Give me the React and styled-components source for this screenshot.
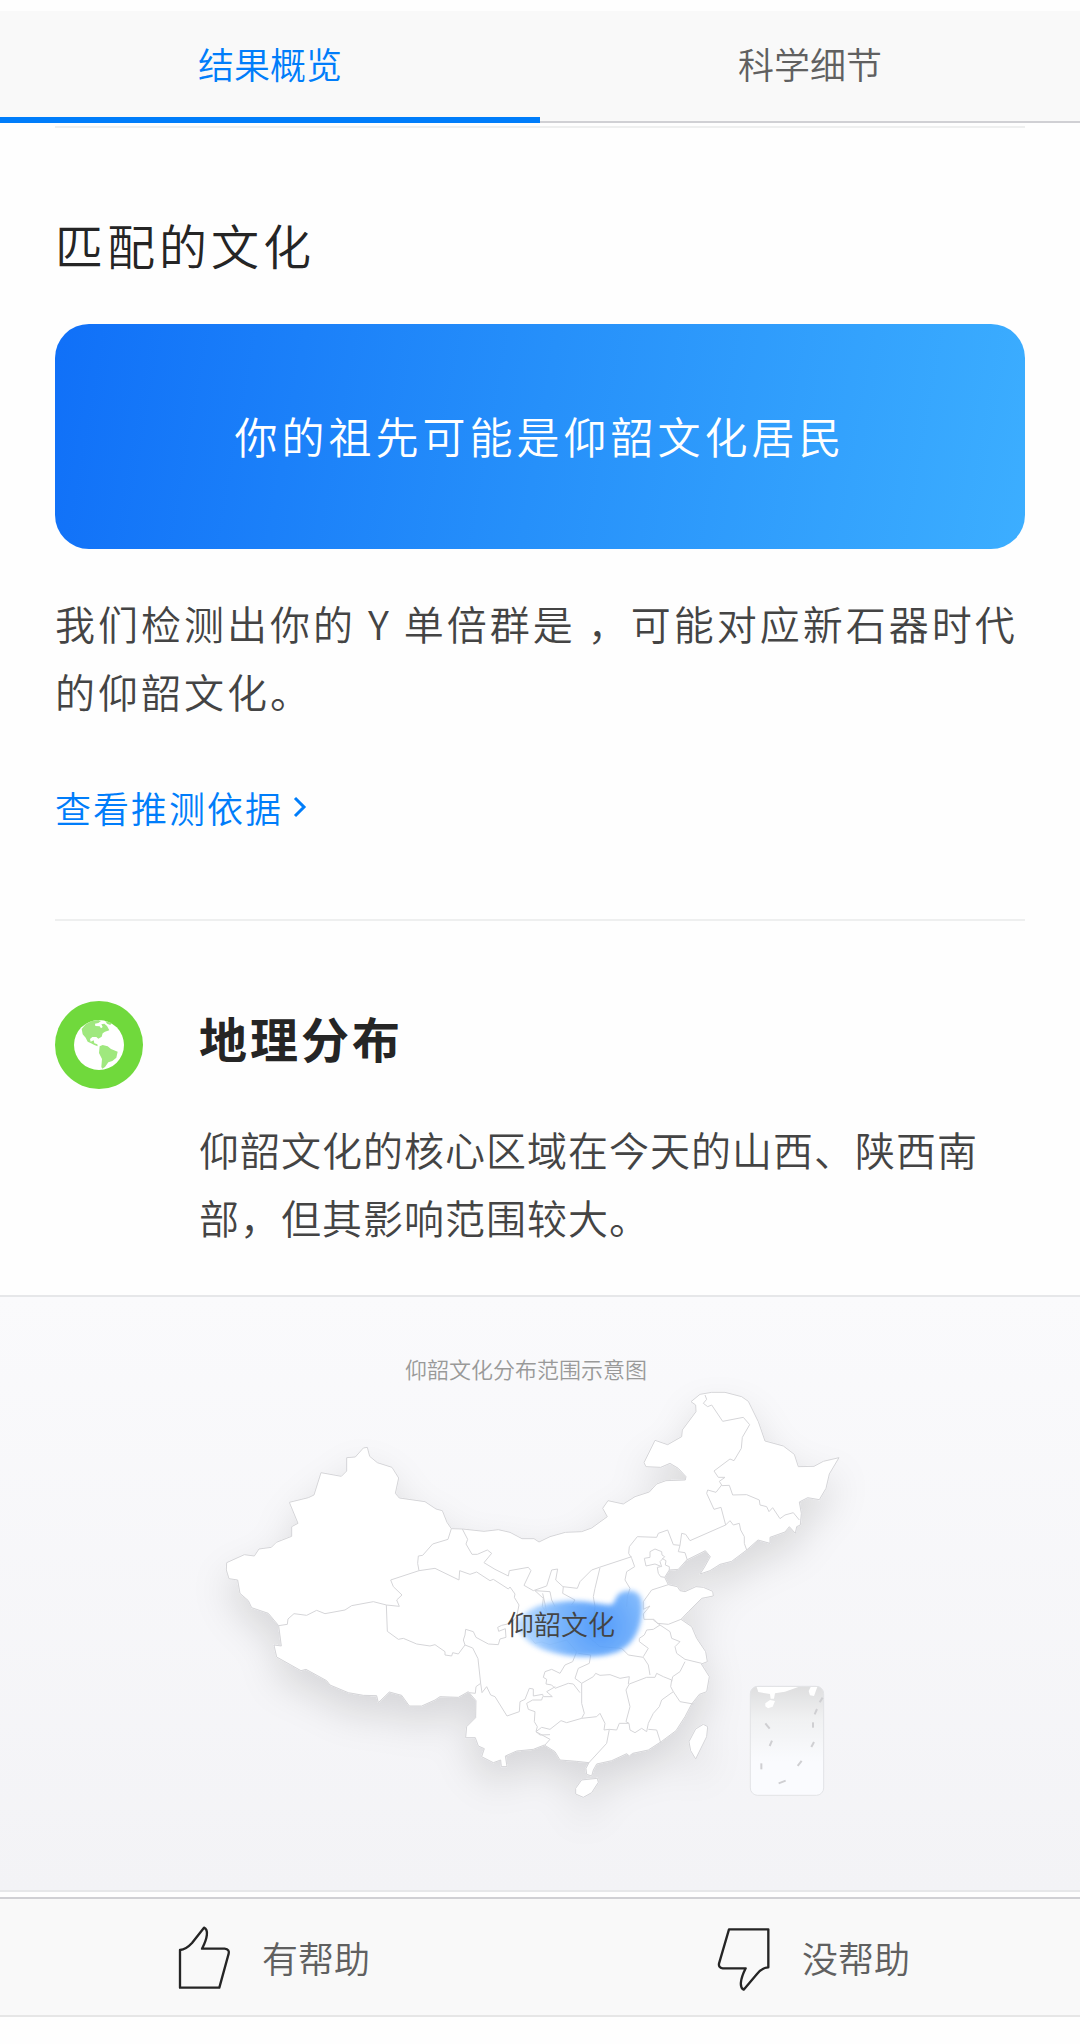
import React, { useState } from 'react';
import styled, { createGlobalStyle } from 'styled-components';

const GlobalStyle = createGlobalStyle`
  * {
    box-sizing: border-box;
  }

  body {
    margin: 0;
    background: #fefefe;
    color: #444444;
    font-family: 'Noto Sans CJK SC', sans-serif;
    font-weight: 350;
  }

  button {
    font: inherit;
    border: none;
    cursor: pointer;
  }
`;

const Page = styled.div`
  padding: 11px 0 27px;
`;

const Tabs = styled.nav`
  display: flex;
  height: 112px;
  background: #f9f9f9;
`;

const Tab = styled.button`
  flex: 1;
  padding: ${(props) => (props.$active ? '0 0 2px' : '0 0 6px')};
  background: none;
  font-size: 36px;
  color: ${(props) => (props.$active ? '#007dfa' : '#606060')};
  border-bottom: ${(props) => (props.$active ? '6px solid #007dfa' : '2px solid #d0d0d4')};
`;

const Section = styled.section`
  margin: 0 55px;
`;

const Divider = styled.hr`
  height: 2px;
  margin: 0;
  border: none;
  background: #eeefef;
`;

const TopRule = styled(Divider)`
  margin-top: 3px;
`;

const Title = styled.h2`
  margin: 0;
  padding: 80px 0 44px;
  font-size: 48px;
  font-weight: 350;
  line-height: 72px;
  letter-spacing: 4px;
  color: #252525;
`;

const Banner = styled.div`
  display: flex;
  align-items: center;
  justify-content: center;
  height: 225px;
  padding-bottom: 3px;
  border-radius: 34px;
  background: linear-gradient(100deg, #1070f8 0%, #2690fa 50%, #3caeff 100%);
  color: #ffffff;
  font-size: 43px;
  letter-spacing: 4px;
`;

const Summary = styled.p`
  margin: 0;
  padding: 40px 0 48px;
  font-size: 40px;
  line-height: 68px;
  letter-spacing: 3px;
`;

const LinkRow = styled.div`
  display: flex;
  padding-bottom: 78px;
`;

const MoreLink = styled.a`
  display: inline-flex;
  align-items: center;
  gap: 10px;
  color: #007dfa;
  font-size: 36px;
  line-height: 68px;
  letter-spacing: 2px;
  text-decoration: none;
`;

const GeoSection = styled(Section)`
  display: grid;
  grid-template-columns: 88px 1fr;
  column-gap: 56px;
  padding: 80px 0 44px;
`;

const GeoTitle = styled.h2`
  margin: 0 0 42px;
  font-size: 48px;
  font-weight: 700;
  line-height: 72px;
  letter-spacing: 3px;
  color: #252525;
`;

const GeoText = styled.p`
  margin: 0;
  font-size: 40px;
  line-height: 68px;
  letter-spacing: 1px;
`;

const MapFigure = styled.figure`
  margin: 0 0 5px;
  border-top: 2px solid #e6e7e9;
  border-bottom: 2px solid #e6e7e9;
  background: linear-gradient(#fafafc, #f3f3f6);

  svg {
    display: block;
    width: 100%;
  }
`;

const Feedback = styled.footer`
  display: flex;
  height: 120px;
  border-top: 2px solid #d0d0d4;
  border-bottom: 2px solid #e6e6e6;
  background: #f9f9f9;
`;

const FeedbackButton = styled.button`
  flex: 1;
  display: flex;
  align-items: center;
  justify-content: center;
  gap: 28px;
  padding: 0;
  background: none;
  color: #606060;
  font-size: 36px;

  svg {
    overflow: visible;
  }
`;

const GlobeIcon = () => (
  <svg width="88" height="88" viewBox="0 0 264 264" aria-hidden="true">
    <circle cx="132" cy="132" r="132" fill="#70d93c" />
    <circle cx="132" cy="132" r="75" fill="#fff" />
    <g fill="#9fe87e">
      <path d="M80 84 L92 70 L110 60 L130 57 L138 60 L130 66 L120 68 L121 75 L134 76 L138 82 L143 78 L139 70 L148 68 L156 75 L163 88 L150 92 L143 97 L140 107 L130 113 L124 108 L112 108 L105 114 L107 122 L116 118 L118 127 L127 130 L128 136 L118 132 L108 127 L98 122 L92 110 L83 100 Z" />
      <path d="M134 136 L143 132 L158 136 L168 144 L188 152 L184 170 L172 180 L160 184 L150 198 L142 203 L139 198 L141 174 L132 156 Z" />
      <path d="M151 60 L170 66 L166 72 L156 68 Z" />
    </g>
  </svg>
);

const ThumbUpIcon = () => (
  <svg width="64" height="64" viewBox="0 0 192 192" fill="none" stroke="#252525" strokeWidth="7" strokeLinejoin="round" aria-hidden="true">
    <path d="M30 75 C46 74 55 66 66 54 L102 8 C116 14 113 38 96 71 H164 C175 72 178 79 176 86 L148 188 H30 Z" />
  </svg>
);

const ThumbDownIcon = () => (
  <svg width="64" height="64" viewBox="0 0 192 192" fill="none" stroke="#252525" strokeWidth="7" strokeLinejoin="round" aria-hidden="true">
    <path d="M57 13 H175 V127 C162 127 150 136 139 149 L101 194 C88 188 90 164 107 130 H38 C28 129 26 122 27 116 Z" />
  </svg>
);

const mainland =
  'M80 668 L133 644 L163 648 L177 627 L214 622 L229 607 L275 589 L275 560 L294 550 L268 487 L325 473 L342 465 L363 398 L424 409 L440 393 L440 353 L466 351 L490 324 L502 322 L509 349 L532 368 L576 382 L596 414 L586 460 L598 474 L675 485 L708 507 L727 512 L741 547 L754 566 L787 567 L852 574 L895 569 L930 577 L966 596 L1002 596 L1017 606 L1050 590 L1096 577 L1145 575 L1175 564 L1222 530 L1208 505 L1224 482 L1270 492 L1305 470 L1348 456 L1370 432 L1398 422 L1456 420 L1458 410 L1435 385 L1410 370 L1382 382 L1338 380 L1332 368 L1365 301 L1403 314 L1445 290 L1447 270 L1488 215 L1487 195 L1473 185 L1500 163 L1535 157 L1575 157 L1625 170 L1645 184 L1675 245 L1695 303 L1750 318 L1783 343 L1795 380 L1842 379 L1870 364 L1917 353 L1888 402 L1878 445 L1858 479 L1823 473 L1798 486 L1804 520 L1801 555 L1790 560 L1786 580 L1768 560 L1755 576 L1710 592 L1710 610 L1674 600 L1640 630 L1595 664 L1560 673 L1530 692 L1500 702 L1512 684 L1531 650 L1516 632 L1460 660 L1435 688 L1408 690 L1394 712 L1405 734 L1432 740 L1440 752 L1455 755 L1488 740 L1510 742 L1538 754 L1540 768 L1505 775 L1465 815 L1443 838 L1475 860 L1490 895 L1517 935 L1522 965 L1504 972 L1528 1010 L1520 1055 L1498 1063 L1475 1092 L1455 1130 L1428 1172 L1385 1204 L1345 1230 L1298 1240 L1288 1248 L1280 1241 L1235 1262 L1190 1272 L1180 1290 L1175 1308 L1160 1303 L1158 1285 L1167 1268 L1130 1264 L1080 1260 L1065 1235 L1033 1215 L1000 1228 L950 1233 L916 1248 L921 1280 L904 1280 L902 1260 L880 1268 L845 1250 L853 1226 L835 1218 L826 1193 L797 1193 L800 1160 L827 1133 L828 1082 L805 1055 L775 1072 L720 1070 L705 1080 L665 1098 L628 1098 L605 1066 L568 1056 L535 1088 L530 1067 L490 1066 L445 1058 L390 1035 L380 1022 L318 988 L303 992 L230 951 L222 915 L244 918 L236 857 L205 820 L155 803 L145 782 L120 760 L113 720 L87 716 L79 690 Z';

const taiwan = 'M1467 1205 L1487 1167 L1510 1153 L1523 1160 L1520 1190 L1487 1257 L1472 1232 Z';
const hainan = 'M1127 1345 L1145 1320 L1192 1315 L1195 1327 L1175 1358 L1150 1372 L1127 1362 Z';

const westBorders = [
  'M754 566 L744 598 L698 612 L668 646 L655 648 L653 670 L657 692 L572 720 L580 740 L606 765 L590 780 L598 799 L559 795 L520 785 L455 797 L435 810 L375 821 L350 811 L320 826 L282 821 L264 837 L262 853 L236 857',
  'M559 795 L562 874 L595 898 L610 895 L650 912 L690 918 L705 914 L735 935 L735 945 L755 948 L758 938 L775 942 L795 915',
  'M657 692 L705 685 L777 720 L779 692 L810 703 L830 696 L870 722 L880 718 L925 747 L930 741 L945 762 L943 772 L957 795 L950 830 L932 850 L905 856 L893 862 L896 874 L916 866 L918 892 L900 897 L895 914 L865 912 L828 892 L820 875 L797 868 L795 885 L790 900 L795 915 L818 924 L834 956 L842 1030 L828 1040 L826 1060 L808 1058',
  'M842 1030 L846 1058 L860 1040 L872 1065 L885 1070 L921 1128 L958 1115 L960 1085 L975 1078 L988 1045 L1000 1047 L1000 1068 L1028 1063 L1030 1070 L1057 1070 L1040 1055 L1066 1040',
  'M787 567 L803 598 L798 612 L816 643 L832 643 L862 630 L875 640 L852 668 L885 688 L925 708 L928 692 L985 682 L993 692 L972 736 L1000 752 L1040 738 L1055 690 L1073 687 L1067 720 L1089 740 L1132 745 L1140 725 L1175 690 L1198 682 L1295 650',
  'M1005 752 L1030 775 L1027 800 L1050 830',
];

const northBorders = [
  'M275 655 L266 640 L268 620 L292 590 L350 592 L355 580 L383 570 L400 614 L420 616 L425 580 L437 583 L450 602 L557 555 L570 542 L580 555 L598 550 L602 570 L613 590 L613 610 L620 630',
  'M495 165 L500 178 L490 190 L503 200 L515 195 L548 244 L610 232 L629 254 L607 292 L604 325 L582 362 L570 357 L522 393 L535 412 L555 412 L538 424 L545 435 L528 457 L503 450 L500 460 L522 508 L543 502 L557 555',
  'M545 437 L568 436 L578 465 L620 464 L658 480 L660 495 L680 500 L687 515 L698 503 L720 536 L735 525 L760 518 L778 540',
  'M420 616 L415 635 L435 638 L442 660',
  'M313 655 L330 652 L330 635 L345 627 L365 635 L366 645 L374 650 L360 665 L365 680 L345 672 L318 678 Z',
  'M366 655 L378 662 L376 675 L388 680 L388 690 M362 680 L352 682 L355 700 L362 710 L374 712',
  'M180 683 L165 745 L160 770 L165 800 L160 840 L165 890',
  'M275 655 L284 680 L260 695 L255 720 L270 745 L262 770 L260 800',
  'M310 785 L335 750 L385 734 M310 785 L310 808 L330 798 L310 822 L312 838 L342 838 L352 850 L385 853 L423 838',
];

const southBorders = [
  'M105 152 L150 155 L155 180 L165 200 M190 140 L188 160 L225 180 L215 195 M128 160 L140 215 L110 250',
  'M90 290 L105 310 L125 306 L150 314 L200 300 L230 335 L218 365 L195 375 L180 400 L155 388 L135 395 L130 412 L140 418 L138 432 L155 435 L165 445 L205 430 L220 432 L240 458',
  'M235 340 L272 345 L268 370 L235 385 L225 415 L245 430 L280 410 L287 400 L300 406 L330 404 L360 415 L388 410 L385 432',
  'M265 290 L300 320 L365 325 L385 345 L430 352 L445 375 L450 405',
  'M388 432 L440 412 L465 412 L470 400 L490 410 L515 420 L512 440 L520 455 L510 462 L485 480 L478 500 L460 520 L445 550 L440 575 L425 565 L405 578 L390 570 L387 550 M388 432 L378 450 L390 500 L378 545 L387 550',
  'M245 430 L245 490 L253 520 L245 535 L290 530 L300 520 L315 550 L312 570 L328 568 L350 570 L358 550 L387 550',
  'M245 535 L200 548 L183 542 L150 568 L125 562 L108 575 L112 560 L103 545 L105 515 L85 508 L80 490 L98 480 L125 480 L128 470',
  'M328 568 L320 610 L265 670 M108 575 L150 598 L135 615 M108 575 L120 585 L150 584',
  'M460 240 L480 255 L460 268 L440 270 L433 285 L418 295 L418 305 L445 325 L430 350 M480 255 L510 275 L515 295 L540 305 L525 320 L530 340 L555 358 L605 370',
  'M515 425 L518 410 L540 395 L555 365 M520 455 L540 485 L580 492 M445 568 L470 570 L482 608',
];

const insetDashes = [
  'M676 1150 L689 1166', 'M696 1202 L689 1218', 'M664 1270 V1288', 'M716 1330 L737 1322',
  'M773 1278 L785 1263', 'M814 1221 L822 1206', 'M819 1147 V1163', 'M824 1123 L831 1107', 'M839 1087 L848 1073',
];

const ChinaMap = () => (
  <svg viewBox="0 0 1080 593" role="img" aria-label="仰韶文化分布范围示意图">
    <defs>
      <filter id="land-shadow" x="-20%" y="-20%" width="140%" height="150%">
        <feDropShadow dx="0" dy="56" stdDeviation="56" floodColor="#000" floodOpacity="0.12" />
      </filter>
      <filter id="soft-edge" x="-20%" y="-30%" width="140%" height="160%">
        <feGaussianBlur stdDeviation="8" />
      </filter>
      <radialGradient id="culture" gradientUnits="userSpaceOnUse" cx="300" cy="260" r="240">
        <stop offset="0" stopColor="#4292fa" />
        <stop offset="0.5" stopColor="#6cadfc" />
        <stop offset="1" stopColor="#b4d8ff" />
      </radialGradient>
      <linearGradient id="inset" x1="0" y1="0" x2="0" y2="1">
        <stop offset="0" stopColor="#dededf" />
        <stop offset="0.3" stopColor="#f0f1f2" />
        <stop offset="0.7" stopColor="#fafbfe" />
      </linearGradient>
    </defs>
    <text x="526" y="81" textAnchor="middle" fontSize="22" fill="#999">仰韶文化分布范围示意图</text>
    <g transform="translate(0 -2) scale(0.33333)">
      <g transform="translate(600 135)" fill="#fff" stroke="#d5d5d8" strokeWidth="3" strokeLinejoin="round" filter="url(#land-shadow)">
        <path d={mainland} />
        <path d={taiwan} />
        <path d={hainan} />
      </g>
      <g fill="none" stroke="#d5d5d8" strokeWidth="3" strokeLinejoin="round">
        <g transform="translate(600 135)">
          {westBorders.map((d) => <path key={d} d={d} />)}
        </g>
        <g transform="translate(1620 135)">
          {northBorders.map((d) => <path key={d} d={d} />)}
        </g>
        <g transform="translate(1500 735)">
          {southBorders.map((d) => <path key={d} d={d} />)}
        </g>
      </g>
      <g transform="translate(1500 735)">
        <path
          d="M48 255 C70 205 130 186 210 183 C270 182 310 196 335 194 C350 185 342 155 385 152 C420 152 428 175 427 205 C425 260 405 310 360 332 C310 356 210 355 140 332 C95 318 62 290 48 255 Z"
          fill="url(#culture)"
          opacity="0.9"
          filter="url(#soft-edge)"
        />
      </g>
      <g transform="translate(1620 135)">
        <rect x="631" y="1039" width="220" height="327" rx="22" fill="url(#inset)" stroke="#e2e3e6" strokeWidth="3" />
        <path d="M650 1041 H775 L735 1055 L705 1060 L702 1076 L692 1076 L690 1062 L655 1056 Z" fill="#fff" />
        <path d="M676 1090 L690 1080 L705 1083 L698 1100 L684 1105 L676 1099 Z" fill="#fff" />
        <path d="M812 1041 H832 L822 1068 L810 1066 L806 1053 Z" fill="#fff" />
        <g stroke="#cfcfd2" strokeWidth="6">
          {insetDashes.map((d) => <path key={d} d={d} />)}
        </g>
      </g>
    </g>
    <text x="507" y="338" fontSize="27" fill="#444">仰韶文化</text>
  </svg>
);

const App = () => {
  const [activeTab, setActiveTab] = useState('overview');

  return (
    <>
      <GlobalStyle />
      <Page>
        <Tabs>
          <Tab $active={activeTab === 'overview'} onClick={() => setActiveTab('overview')}>结果概览</Tab>
          <Tab $active={activeTab === 'details'} onClick={() => setActiveTab('details')}>科学细节</Tab>
        </Tabs>
        <Section>
          <TopRule />
          <Title>匹配的文化</Title>
          <Banner>你的祖先可能是仰韶文化居民</Banner>
          <Summary>我们检测出你的 Y 单倍群是 ，可能对应新石器时代的仰韶文化。</Summary>
          <LinkRow>
            <MoreLink href="#evidence">
              查看推测依据
              <svg width="14" height="22" viewBox="0 0 14 22" fill="none" stroke="currentColor" strokeWidth="3" aria-hidden="true">
                <path d="M2 2 L11 11 L2 20" />
              </svg>
            </MoreLink>
          </LinkRow>
          <Divider />
        </Section>
        <GeoSection>
          <GlobeIcon />
          <div>
            <GeoTitle>地理分布</GeoTitle>
            <GeoText>仰韶文化的核心区域在今天的山西、陕西南部，但其影响范围较大。</GeoText>
          </div>
        </GeoSection>
        <MapFigure>
          <ChinaMap />
        </MapFigure>
        <Feedback>
          <FeedbackButton>
            <ThumbUpIcon />
            有帮助
          </FeedbackButton>
          <FeedbackButton>
            <ThumbDownIcon />
            没帮助
          </FeedbackButton>
        </Feedback>
      </Page>
    </>
  );
};

export default App;
